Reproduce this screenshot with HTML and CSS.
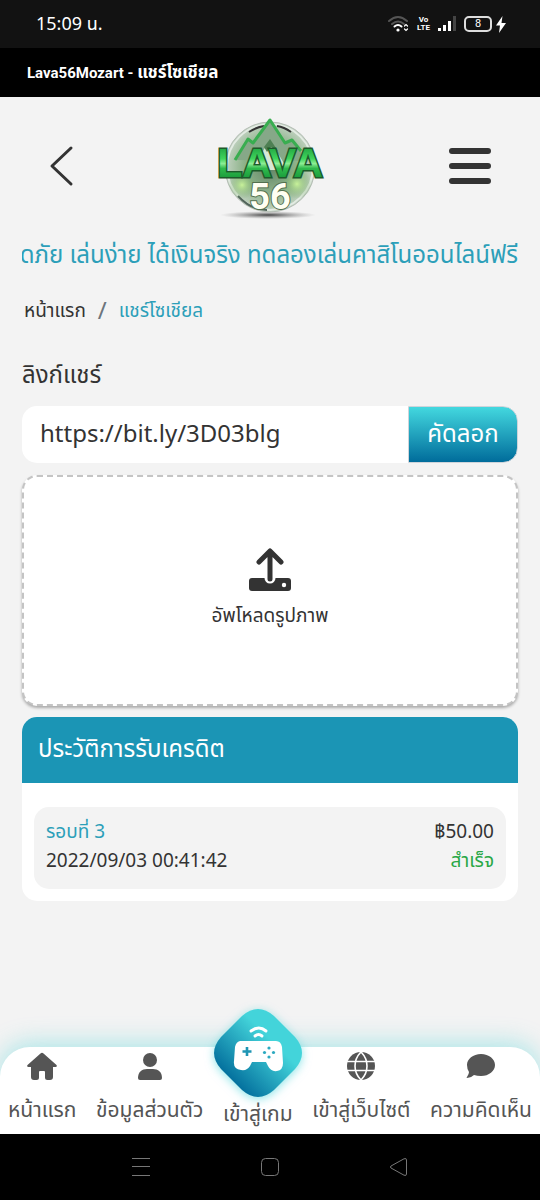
FILE: index.html
```html
<!DOCTYPE html>
<html lang="th">
<head>
    <meta charset="UTF-8">
    <meta name="viewport" content="width=device-width, initial-scale=1.0">
    <title>Lava56Mozart - แชร์โซเชียล</title>
    <link rel="stylesheet" href="styles.css">
</head>
<body>
    <div class="status_bar">
        <span>15:09 น.</span>
        <div class="status_icons">
            <svg width="22" height="18" viewBox="0 0 22 18" fill="none" stroke-linecap="round">
                <path d="M1 6Q10 -2 19 6" stroke="#555" stroke-width="2"/>
                <path d="M4 9Q10 4 16 9" stroke="#555" stroke-width="2"/>
                <path d="M6.500 11.500Q10 8.500 13.500 11.500" stroke="#fff" stroke-width="2"/>
                <circle cx="10" cy="15" r="1.600" fill="#fff"/>
                <path d="M16.500 11l1.500-1.500 1.500 1.500M16.500 14l1.500 1.500 1.500-1.500" stroke="#fff" stroke-width="1.200"/>
            </svg>
            <span class="volte">Vo<br>LTE</span>
            <svg width="20" height="18" viewBox="0 0 20 18">
                <path d="M1 13h3v3H1zM6 10h3v6H6zM11 6h3v10h-3z" fill="#fff"/>
                <path d="M16 1h3v15h-3z" fill="#444"/>
            </svg>
            <span class="battery">8</span>
            <svg class="bolt" width="10" height="17" viewBox="0 0 10 17"><path d="M6.500 0L0 9.500h4L3 17l7-10H5.500z" fill="#fff"/></svg>
        </div>
    </div>
    <div class="title_bar">Lava56Mozart - <span>แชร์โซเชียล</span></div>

    <header class="header">
        <button type="button" class="icon_btn" aria-label="ย้อนกลับ">
            <svg width="48" height="42" viewBox="0 0 48 42" fill="none" stroke="#333" stroke-width="3" stroke-linecap="round" stroke-linejoin="round"><path d="M27 3L8 21l19 18"/></svg>
        </button>
        <svg class="logo" width="110" height="108" viewBox="0 0 110 108">
            <defs>
                <linearGradient id="lava" gradientUnits="userSpaceOnUse" x1="0" y1="34" x2="0" y2="66">
                    <stop offset="0" stop-color="#1fa040"/>
                    <stop offset=".4" stop-color="#3fd45c"/>
                    <stop offset=".55" stop-color="#8dee95"/>
                    <stop offset=".7" stop-color="#2fba4c"/>
                    <stop offset="1" stop-color="#1a9c3b"/>
                </linearGradient>
                <radialGradient id="ball">
                    <stop offset="0" stop-color="#5f8264"/>
                    <stop offset=".6" stop-color="#90b48c"/>
                    <stop offset="1" stop-color="#c3d3c3"/>
                </radialGradient>
                <radialGradient id="glow">
                    <stop offset="0" stop-color="#c8f29a"/>
                    <stop offset="1" stop-color="#6da463" stop-opacity="0"/>
                </radialGradient>
                <radialGradient id="shade">
                    <stop offset="0" stop-color="#444"/>
                    <stop offset="1" stop-color="#999" stop-opacity="0"/>
                </radialGradient>
            </defs>
            <ellipse cx="53" cy="103" rx="48" ry="4" fill="url(#shade)"/>
            <circle cx="55" cy="55" r="45" fill="url(#ball)" stroke="#b5bdb5" stroke-width="1"/>
            <circle cx="55" cy="55" r="43" fill="none" stroke="#e3ebe3" stroke-width="2"/>
            <path d="M34 20Q42 15 49 14M62 14Q69 15 76 20" fill="none" stroke="#333" stroke-width="2"/>
            <path d="M23 84Q36 98 52 98" fill="none" stroke="#52645a" stroke-width="2"/>
            <circle cx="27" cy="73" r="14" fill="url(#glow)"/>
            <circle cx="82" cy="72" r="15" fill="url(#glow)"/>
            <path d="M20 48L33 27l5 4L55 8l15 23 7-3 9 11v10z" fill="#86a888"/>
            <path d="M20 48L33 27l5 4L55 8l15 23 7-3 9 11" fill="none" stroke="#39ad50" stroke-width="3" stroke-linejoin="round"/>
            <path d="M36 58l19-30 18 30z" fill="#d8e8d6"/>
            <path d="M49 35l6-8 8 12-7-4-4 5z" fill="#4e8053"/>
            <text class="logo_name" x="55" y="65" text-anchor="middle" stroke="#1d5a2b" stroke-width="3">LAVA</text>
            <text class="logo_num" x="55" y="97" text-anchor="middle" fill="#fffff2" stroke="#53704f" stroke-width="2">56</text>
        </svg>
        <button type="button" class="icon_btn" aria-label="เมนู">
            <svg width="44" height="42" viewBox="0 0 44 42" stroke="#333" stroke-width="6" stroke-linecap="round"><path d="M4 6h36M4 21h36M4 36h36"/></svg>
        </button>
    </header>

    <main class="content">
        <div class="marquee"><span>ดภัย เล่นง่าย ได้เงินจริง ทดลองเล่นคาสิโนออนไลน์ฟรี</span></div>
        <nav class="breadcrumb">
            <a href="#">หน้าแรก</a>
            <span class="slash">/</span>
            <span class="current">แชร์โซเชียล</span>
        </nav>

        <label class="share_label" for="share_link">ลิงก์แชร์</label>
        <div class="share_group">
            <input type="text" id="share_link" value="https://bit.ly/3D03blg" readonly>
            <button type="button">คัดลอก</button>
        </div>

        <button type="button" class="upload">
            <svg width="44" height="44" viewBox="0 0 44 44">
                <path d="M4 30h36a3 3 0 0 1 3 3v7a3 3 0 0 1-3 3H4a3 3 0 0 1-3-3v-7a3 3 0 0 1 3-3z" fill="#333"/>
                <path d="M22 5v25" stroke="#fff" stroke-width="11" stroke-linecap="round"/>
                <path d="M22 5v26M11 14L22 3l11 11" fill="none" stroke="#333" stroke-width="5" stroke-linecap="round" stroke-linejoin="round"/>
                <circle cx="36" cy="37" r="2.200" fill="#fff"/>
            </svg>
            <span>อัพโหลดรูปภาพ</span>
        </button>

        <section class="history">
            <h2>ประวัติการรับเครดิต</h2>
            <div class="history_body">
                <div class="history_item">
                    <div>
                        <div class="round">รอบที่ 3</div>
                        <div>2022/09/03 00:41:42</div>
                    </div>
                    <div class="amount">
                        <div>฿50.00</div>
                        <div class="success">สำเร็จ</div>
                    </div>
                </div>
            </div>
        </section>
    </main>

    <nav class="tab_bar">
        <a href="#">
            <svg width="32" height="30" viewBox="0 0 32 30" fill="#555"><path d="M14.500 1.600a2 2 0 0 1 3 0L30.500 13q1 2-1 2H27v10q0 3-3 3h-2.500q-2.500 0-2.500-2.500V20q0-1-1-1h-4q-1 0-1 1v5.500q0 2.500-2.500 2.500H8q-3 0-3-3V15H2.500q-2 0-1-2z"/></svg>
            <span>หน้าแรก</span>
        </a>
        <a href="#">
            <svg width="32" height="30" viewBox="0 0 32 30" fill="#555"><circle cx="16" cy="8" r="7"/><path d="M4 26c0-6 4-9 9-9h6c5 0 9 3 9 9q0 2-2 2H6q-2 0-2-2z"/></svg>
            <span>ข้อมูลส่วนตัว</span>
        </a>
        <a href="#" class="play">
            <svg class="play_icon" width="88" height="88" viewBox="0 0 88 88">
                <defs>
                    <linearGradient id="play" x1="1" y1="0" x2="0" y2="1">
                        <stop offset=".35" stop-color="#43d4da"/>
                        <stop offset=".8" stop-color="#04719e"/>
                    </linearGradient>
                </defs>
                <path d="M28 7Q44-7 60 7L81 28Q95 44 81 60L60 81Q44 95 28 81L7 60Q-7 44 7 28z" fill="url(#play)"/>
                <g fill="none" stroke="#fff" stroke-width="3" stroke-linecap="round"><path d="M37 22q8-6 15 0M41 27q3.500-3 7 0"/></g>
                <path d="M26 32h36q5 0 6 6l1 16q0 7-6 8-6 1-9-5l-2-4H38l-2 4q-3 5-9 4-8-1-7-9l1-14q1-5 5-6z" fill="#fff"/>
                <path d="M33 38v9M28.500 42.500h9" stroke="#1f95b4" stroke-width="2.600"/>
                <g fill="#2ba9c0"><circle cx="55" cy="39" r="1.600"/><circle cx="55" cy="48" r="1.600"/><circle cx="50.500" cy="43.500" r="1.600"/><circle cx="59.500" cy="43.500" r="1.600"/></g>
            </svg>
            <span>เข้าสู่เกม</span>
        </a>
        <a href="#">
            <svg width="32" height="30" viewBox="0 0 32 30"><circle cx="16" cy="14" r="14" fill="#555"/><path d="M2 9.500h28M2 18.500h28" stroke="#fff" stroke-width="1.600"/><path d="M16 0C8 8 8 20 16 28C24 20 24 8 16 0z" fill="none" stroke="#fff" stroke-width="1.600"/></svg>
            <span>เข้าสู่เว็บไซต์</span>
        </a>
        <a href="#">
            <svg width="32" height="30" viewBox="0 0 32 30" fill="#555"><path d="M16 2c8 0 14 5 14 11s-6 11-14 11q-4 0-7-1-3 3-7 3-1 0 0-1 2-3 2-5-2-3-2-7C2 7 8 2 16 2z"/></svg>
            <span>ความคิดเห็น</span>
        </a>
    </nav>
    <div class="system_bar">
        <svg width="20" height="20" viewBox="0 0 20 20" stroke="#777"><path d="M1 1.500h18M1 9.500h18M1 18.500h18"/></svg>
        <svg width="20" height="20" viewBox="0 0 20 20" fill="none" stroke="#777"><rect x="1.500" y="1.500" width="17" height="17" rx="4"/></svg>
        <svg width="20" height="20" viewBox="0 0 20 20" fill="none" stroke="#777" stroke-linejoin="round"><path d="M2 9L15 1.800q2.500-1 2.500 1.200v14q0 2.200-2.500 1.200L2 11q-1.200-1 0-2z"/></svg>
    </div>
</body>
</html>
```

FILE: styles.css
```css
* {
    box-sizing: border-box;
}
body {
    margin: 0;
    min-height: 100vh;
    display: flex;
    flex-direction: column;
    background: #f3f3f3;
    color: #333;
    font-family: "Noto Sans", "Noto Sans Thai", sans-serif;
    font-size: 19px;
}
a {
    color: inherit;
    text-decoration: none;
}
button, input {
    border: 0;
    padding: 0;
    background: none;
    color: inherit;
    font: inherit;
}
svg {
    display: block;
    flex-shrink: 0;
}

/* status bar */
.status_bar {
    height: 48px;
    padding: 0 34px 0 36px;
    display: flex;
    align-items: center;
    justify-content: space-between;
    background: #121212;
    color: #fff;
    font-size: 18px;
}
.status_icons {
    display: flex;
    align-items: center;
    gap: 7px;
}
.volte {
    font: bold 8px/8px Roboto, sans-serif;
    text-align: center;
}
.battery {
    width: 28px;
    height: 16px;
    border: 2px solid #ddd;
    border-radius: 5px;
    font: 11px/12px Roboto, sans-serif;
    text-align: center;
}
.bolt {
    margin-left: -3px;
}
.title_bar {
    height: 49px;
    padding: 0 27px;
    background: #000;
    color: #fff;
    font: bold 15px/49px Roboto, "Noto Sans Thai", sans-serif;
}
.title_bar span {
    font-size: 17px;
}

/* header */
.header {
    height: 138px;
    padding: 0 48px 0 44px;
    display: flex;
    align-items: center;
    justify-content: space-between;
}
.icon_btn {
    cursor: pointer;
}
.logo_name {
    fill: url(#lava);
    font: 900 41px "Liberation Sans", sans-serif;
    paint-order: stroke;
}
.logo_num {
    font: bold 36px Roboto, sans-serif;
    paint-order: stroke;
}

/* content */
.content {
    flex: 1;
    padding: 0 22px;
}
.marquee {
    display: flex;
    justify-content: flex-end;
    overflow: hidden;
    white-space: nowrap;
    color: #2c9fb9;
    font-size: 24px;
    line-height: 38px;
}
.breadcrumb {
    display: flex;
    gap: 12px;
    margin-top: 22px;
    padding: 0 2px;
    line-height: 30px;
}
.slash {
    color: #6c757d;
    font-size: 24px;
}
.current, .round {
    color: #2c9fb9;
}
.share_label {
    display: block;
    margin-top: 32px;
    font-size: 24px;
    line-height: 34px;
}
.share_group {
    display: flex;
    height: 57px;
    margin-top: 15px;
    border-radius: 15px;
    background: #fff;
    font-size: 24px;
}
.share_group input {
    flex: 1;
    min-width: 0;
    padding: 0 18px 4px;
}
.share_group button {
    width: 110px;
    padding-bottom: 1px;
    border: 1px solid #ced4da;
    border-radius: 0 15px 15px 0;
    background: linear-gradient(#43d8df, #006c9b);
    color: #fff;
}
.upload {
    width: 100%;
    height: 231px;
    margin-top: 12px;
    padding-bottom: 2px;
    display: flex;
    flex-direction: column;
    align-items: center;
    justify-content: center;
    gap: 7px;
    border: 2px dashed #c4c4c4;
    border-radius: 15px;
    background: #fff;
    box-shadow: 0 2px 3px rgba(0, 0, 0, .3);
    line-height: 32px;
}
.history {
    margin-top: 11px;
    border-radius: 15px;
    background: #fff;
    overflow: hidden;
}
.history h2 {
    margin: 0;
    padding: 0 16px 4px;
    background: #1b95b5;
    color: #fff;
    font-size: 24px;
    font-weight: normal;
    line-height: 62px;
}
.history_body {
    padding: 24px 12px 12px;
}
.history_item {
    display: flex;
    justify-content: space-between;
    padding: 10px 12px 14px;
    border-radius: 15px;
    background: #f3f3f3;
    line-height: 29px;
}
.amount {
    text-align: right;
}
.success {
    color: #28a745;
}

/* bottom menu */
.tab_bar {
    height: 87px;
    padding: 5px 8px 0;
    display: flex;
    justify-content: space-between;
    border-radius: 30px 30px 0 0;
    background: #fff;
    box-shadow: 0 -4px 24px rgba(67, 212, 218, .4);
    color: #555;
    font-size: 21px;
    line-height: 30px;
    white-space: nowrap;
}
.tab_bar a {
    display: flex;
    flex-direction: column;
    align-items: center;
    gap: 12px;
}
.tab_bar .play {
    position: relative;
    padding-top: 46px;
}
.play_icon {
    position: absolute;
    bottom: 37px;
    filter: drop-shadow(0 2px 5px rgba(67, 212, 218, .6));
}
.system_bar {
    height: 66px;
    padding: 0 131px;
    display: flex;
    align-items: center;
    justify-content: space-between;
    background: #000;
}
```
